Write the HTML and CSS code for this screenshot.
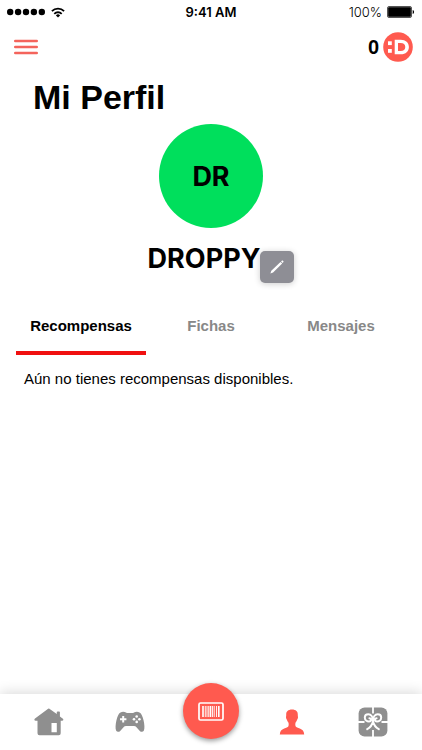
FILE: index.html
```html
<!DOCTYPE html>
<html lang="es">
<head>
<meta charset="utf-8">
<meta name="viewport" content="width=device-width, initial-scale=1">
<title>Mi Perfil</title>
<link rel="stylesheet" href="styles.css">
</head>
<body>
<div class="status">
  <div class="status-left">
    <svg class="signal" width="38" height="8" viewBox="0 0 38 8" aria-hidden="true"><circle cx="3.2" cy="4" r="3.2"/><circle cx="11.1" cy="4" r="3.2"/><circle cx="19" cy="4" r="3.2"/><circle cx="26.9" cy="4" r="3.2"/><circle cx="34.8" cy="4" r="3.2"/></svg>
    <svg width="14" height="11" viewBox="0 0 14 11" fill="none" stroke="#000" stroke-width="1.8" aria-hidden="true"><path d="M.9 4.2a8.6 8.6 0 0 1 12.2 0"/><path d="M3.3 6.8a5.2 5.2 0 0 1 7.4 0"/><path d="M4.9 8.4a3 3 0 0 1 4.2 0L7 10.6z" fill="#000" stroke="none"/></svg>
  </div>
  <span class="clock">9:41 AM</span>
  <div class="status-right">
    <span>100%</span>
    <svg width="28" height="12" viewBox="0 0 28 12" aria-hidden="true"><rect x=".5" y=".5" width="24" height="11" rx="1.5" fill="#aaa" stroke="#555"/><rect x="1.2" y="1.200" width="22.600" height="9.600" rx="1"/><path d="M25.700 4c1.800.3 1.800 3.700 0 4z"/></svg>
  </div>
</div>
<header class="header">
  <button class="menu" aria-label="Menú">
    <svg width="24" height="16" viewBox="0 0 24 16" stroke="#f4645c" stroke-width="2.4" stroke-linecap="round" aria-hidden="true"><path d="M1.200 2h21.600M1.200 8h21.600M1.200 14h21.600"/></svg>
  </button>
  <div class="points">
    <span>0</span>
    <svg width="30" height="30" viewBox="0 0 30 30" aria-hidden="true"><circle cx="15" cy="15" r="14.8" fill="#ff5a4f"/><g fill="#fff"><rect x="5" y="9.300" width="3.800" height="3.800"/><rect x="5" y="17" width="3.800" height="3.800"/><path fill-rule="evenodd" d="M11.700 7.700h6c5 0 8.200 2.900 8.200 7.300s-3.200 7.300-8.200 7.300h-6zM15 10.900v8.200h2.600c2.900 0 4.700-1.500 4.700-4.100s-1.800-4.100-4.700-4.100z"/></g></svg>
  </div>
</header>
<main class="main">
  <h1 class="title">Mi Perfil</h1>
  <section class="profile">
    <div class="avatar">DR</div>
    <div class="name">
      <h2>DROPPY</h2>
      <button class="edit" aria-label="Editar nombre">
        <svg width="14" height="14" viewBox="0 0 14 14" fill="#fff" aria-hidden="true"><path d="M.4 13.600l.9-2.800 9.200-8.900 1.700 1.700L3.100 12.600zM11.100 1.400l.6-.6c.5-.5.900-.4 1.300 0l.2.200c.4.400.5.800 0 1.300l-.6.600z"/></svg>
      </button>
    </div>
  </section>
  <nav class="tabs" aria-label="Secciones del perfil">
    <button class="tab tab-active" aria-current="true">Recompensas</button>
    <button class="tab">Fichas</button>
    <button class="tab">Mensajes</button>
  </nav>
  <p class="empty">Aún no tienes recompensas disponibles.</p>
</main>
<nav class="bottom" aria-label="Principal">
  <a href="#inicio" aria-label="Inicio"><svg width="30" height="28" viewBox="0 0 30 28" fill="#8f8f8f" aria-hidden="true"><path fill-rule="evenodd" d="M15 .6 22.800 6V4.200q0-.8.800-.8h1.500q.800 0 .800.800v4.200l3 2.400q.800.700.300 1.500-.2.400-1 .4h-1.500v12.600q0 2-2 2H5.500q-2 0-2-2V12.700H1.600q-1 0-1.200-.8-.2-.7.600-1.300L13.800.9q.6-.500 1.200-.300zM17.500 15v9.300h5.300V15z"/></svg></a>
  <a href="#juegos" aria-label="Juegos"><svg width="30" height="22" viewBox="0 0 30 22" aria-hidden="true"><path fill="#8f8f8f" d="M5.500 1.400C7.500.4 9.500.700 11 1.500q.8.500 1.700.5h4.600q.9 0 1.700-.5c1.500-.8 3.500-1.100 5.500-.1 2 1 3.200 4 4.100 8 .8 3.700 1.300 8.100.2 10.300-.8 1.500-2.800 1.400-4 .2l-4-4.300q-.7-.700-1.700-.700h-8.200q-1 0-1.700.7l-4 4.300c-1.200 1.200-3.200 1.300-4-.2-1.100-2.200-.6-6.600.2-10.300.9-4 2.100-7 4.100-8z"/><path stroke="#fff" stroke-width="2" d="M8.200 5v6.400M5 8.200h6.400"/><g fill="#fff"><circle cx="21.700" cy="5.500" r="1.300"/><circle cx="21.700" cy="10.900" r="1.300"/><circle cx="19" cy="8.200" r="1.300"/><circle cx="24.400" cy="8.200" r="1.300"/></g></svg></a>
  <a class="scan" href="#escanear" aria-label="Escanear código"><svg width="26" height="19" viewBox="0 0 26 19" fill="none" stroke="#fff" aria-hidden="true"><rect x="1" y="1" width="24" height="17" rx="1.500" stroke-width="1.700"/><path stroke-width="1.600" d="M5 4v11M12.500 4v11M20.800 4v11"/><path stroke-width=".9" d="M7.300 4v11M9 4v11M10.700 4v11M14.500 4v11M16.200 4v11M18.500 4v11"/></svg></a>
  <a href="#perfil" aria-label="Perfil" aria-current="page"><svg width="26" height="26" viewBox="0 0 26 26" fill="#ff5a4f" aria-hidden="true"><path d="M13 .4c4 0 6 2.100 5.800 5.300-.1 1 .1 1.600.2 2.200.1 1.300-.5 2-.8 2.700-.4 1-.7 2.100-1.600 3-.4 1.300-.4 2.700 0 3.600.6 1.100 2.300 1.500 4.200 2.300 2.700 1.100 4.200 2.500 4.400 6H.8c.2-3.500 1.700-4.900 4.400-6 1.900-.8 3.600-1.200 4.200-2.300.4-.9.4-2.300 0-3.600-.9-.9-1.200-2-1.600-3-.3-.7-.9-1.400-.8-2.700.1-.6.300-1.200.2-2.200C7 2.500 9 .4 13 .4z"/></svg></a>
  <a href="#premios" aria-label="Premios"><svg width="30" height="30" viewBox="0 0 30 30" fill="none" aria-hidden="true"><rect x=".6" y=".6" width="28.800" height="28.800" rx="6" fill="#8f8f8f"/><path stroke="#fff" stroke-width="1.800" d="M15 0v6.500M15 23V30M0 15h6.500M23.500 15H30"/><path stroke="#fff" stroke-width="2" stroke-linecap="round" stroke-linejoin="round" d="M15 14.500C15 10 13 7.200 10.300 7.200c-2.200 0-3.500 1.500-3.500 3.400 0 2.500 2.200 3.900 4.200 3.900 1.300 0 2-.6 2-1.700 0-1-.7-1.500-1.600-1.500M15 14.500c0-4.500 2-7.300 4.700-7.300 2.200 0 3.500 1.500 3.500 3.400 0 2.500-2.200 3.900-4.200 3.900-1.300 0-2-.6-2-1.700 0-1 .7-1.500 1.600-1.500M15 14.500c-.8 3.500-2.800 6-5.800 7.700M15 14.500c.8 3.500 2.800 6 5.800 7.700"/></svg></a>
</nav>
</body>
</html>
```

FILE: styles.css
```css
* {
  box-sizing: border-box;
}

body {
  margin: 0;
  min-height: 100vh;
  display: flex;
  flex-direction: column;
  background: #fff;
  color: #000;
  font-family: "Liberation Sans", sans-serif;
}

h1,
h2,
p {
  margin: 0;
}

button {
  border: 0;
  padding: 0;
  background: none;
  font: inherit;
  color: inherit;
  cursor: pointer;
}

svg {
  display: block;
}

.status {
  display: grid;
  grid-template-columns: 1fr auto 1fr;
  align-items: center;
  height: 24px;
  padding: 0 7px;
  font-family: Inter, sans-serif;
  font-size: 13px;
}

.status-left,
.status-right {
  display: flex;
  align-items: center;
  gap: 5px;
}

.status-left {
  gap: 6px;
}

.status-right {
  justify-content: flex-end;
  font-weight: 300;
}

.clock {
  font-weight: 600;
}

.header {
  display: flex;
  align-items: center;
  justify-content: space-between;
  height: 46px;
  padding: 0 9px 0 14px;
}

.points {
  display: flex;
  align-items: center;
  gap: 4px;
  font-size: 20px;
  font-weight: 700;
}

.main {
  flex: 1;
}

.title {
  padding: 8px 33px 0;
  font-size: 34px;
  line-height: 38px;
}

.profile {
  display: flex;
  flex-direction: column;
  align-items: center;
  padding-top: 8px;
  font-family: Inter, sans-serif;
  font-size: 27px;
}

.avatar {
  display: grid;
  place-items: center;
  width: 104px;
  height: 104px;
  border-radius: 50%;
  background: #00df5c;
  font-weight: 700;
}

.name {
  display: flex;
  align-items: flex-end;
  padding: 15px 0 0 20px;
}

.name h2 {
  font-size: 27px;
  line-height: 32px;
  margin-bottom: 8px;
}

.edit {
  display: grid;
  place-items: center;
  width: 34px;
  height: 32px;
  border-radius: 5px;
  background: #8e8e95;
  box-shadow: 0 1px 6px rgba(0, 0, 0, 0.2);
}

.tabs {
  display: grid;
  grid-template-columns: repeat(3, 1fr);
  margin: 20px 16px 0;
}

.tab {
  height: 52px;
  padding-bottom: 4px;
  border-bottom: 4px solid transparent;
  color: #888;
  font-size: 15px;
  font-weight: 700;
}

.tab-active {
  border-color: #f01010;
  color: #000;
}

.empty {
  padding: 14px 24px;
  font-size: 15px;
  line-height: 20px;
}

.bottom {
  display: grid;
  grid-template-columns: repeat(5, 1fr);
  grid-template-rows: 100%;
  height: 56px;
  padding: 0 9px;
  background: #fff;
  box-shadow: 0 -2px 12px rgba(0, 0, 0, 0.14);
}

.bottom a {
  display: grid;
  place-items: center;
}

.bottom .scan {
  place-self: end center;
  width: 56px;
  height: 56px;
  margin-bottom: 11px;
  border-radius: 50%;
  background: #ff5a4f;
  box-shadow: 0 2px 5px rgba(0, 0, 0, 0.4);
}
```
